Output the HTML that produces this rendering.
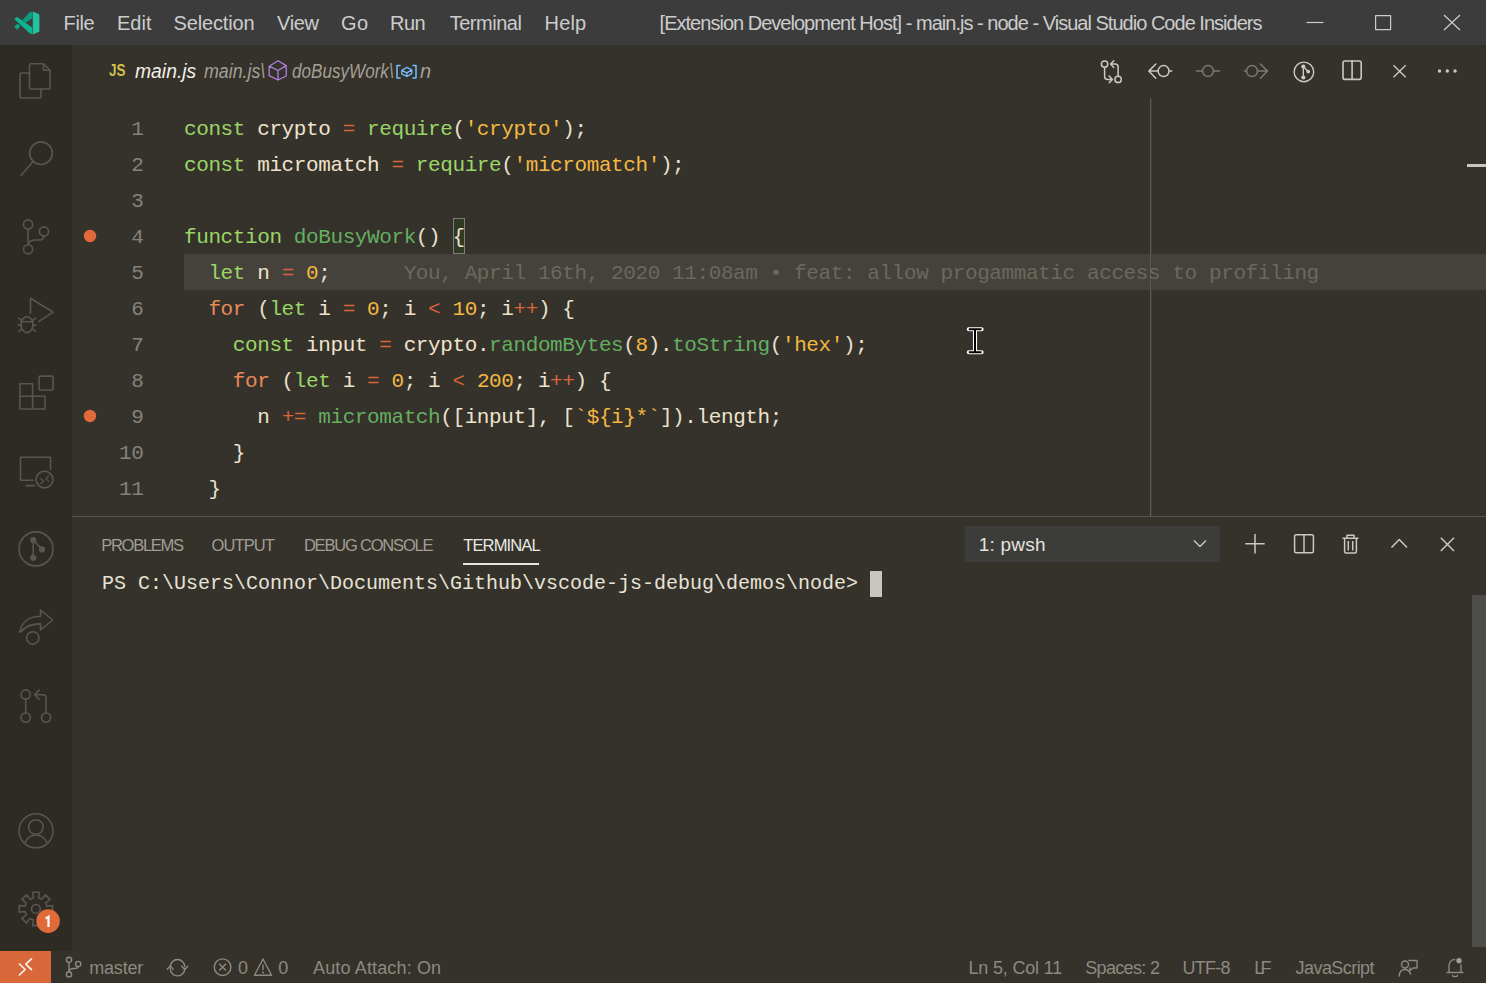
<!DOCTYPE html>
<html><head><meta charset="utf-8">
<style>
*{margin:0;padding:0;box-sizing:border-box}
html,body{width:1486px;height:983px;overflow:hidden;background:#35322b;font-family:"Liberation Sans",sans-serif}
.b{position:absolute}
.t{position:absolute;white-space:pre}
.code{position:absolute;font-family:"Liberation Mono",monospace;font-size:21px;line-height:21px;letter-spacing:-0.4px;white-space:pre}
.ln{position:absolute;font-family:"Liberation Mono",monospace;font-size:21px;line-height:21px;letter-spacing:-0.4px;white-space:pre;color:#85827a}
.term{position:absolute;font-family:"Liberation Mono",monospace;font-size:20px;line-height:20px;white-space:pre;color:#e8e2d6}
svg{position:absolute;left:0;top:0}
</style></head>
<body>
<div class="b" style="left:0;top:0;width:1486px;height:45px;background:#3c3c3c"></div>
<div class="b" style="left:0;top:45px;width:72px;height:906px;background:#2e2b25"></div><div class="b" style="left:71px;top:45px;width:1px;height:906px;background:#2b2823"></div>
<div class="b" style="left:72px;top:45px;width:1414px;height:472px;background:#35322b"></div>
<!-- current line highlight -->
<div class="b" style="left:184px;top:254px;width:1302px;height:36px;background:#45423b"></div>
<!-- bracket match -->
<div class="b" style="left:453px;top:218px;width:12px;height:36px;border:1px solid #7f7c74;background:#2f3a25"></div>
<!-- ruler -->
<div class="b" style="left:1150px;top:98px;width:1px;height:419px;background:#5c5b57"></div><div class="b" style="left:1151px;top:98px;width:1px;height:419px;background:#3f3d38"></div>
<!-- overview mark -->
<div class="b" style="left:1467px;top:164px;width:19px;height:3px;background:#c9c6bf"></div>
<!-- panel -->
<div class="b" style="left:72px;top:516px;width:1414px;height:1px;background:#57534b"></div>
<div class="b" style="left:72px;top:517px;width:1414px;height:434px;background:#35322b"></div>
<div class="b" style="left:463px;top:563px;width:76px;height:2px;background:#e7e4de"></div>
<div class="b" style="left:965px;top:526px;width:255px;height:36px;background:#3c3c3b"></div>
<div class="b" style="left:870px;top:571px;width:12px;height:26px;background:#c9c6bf"></div>
<div class="b" style="left:1472px;top:595px;width:14px;height:352px;background:#4f4d49"></div>
<!-- status -->
<div class="b" style="left:0;top:951px;width:1486px;height:32px;background:#35322b"></div>
<div class="b" style="left:0;top:951px;width:51px;height:32px;background:#d8673a"></div>
<svg width="1486" height="983" viewBox="0 0 1486 983" fill="none" stroke-linecap="round" stroke-linejoin="round">
<g stroke="none"><path d="M29.5 12.3 L32.3 11.6 V18.3 L25.9 22.7 L22.4 20.3 Z" fill="#0a9b7e"/><path d="M14.3 18.9 L16.8 16.8 L32.3 27.4 V34.3 L29.9 33.6 Z" fill="#0bb493"/><path d="M14.3 26.6 L17.7 23.8 L20.4 26 L16.9 29.7 Z" fill="#0aa988"/><path d="M32.8 11.4 L38.6 13.9 Q39.4 14.3 39.4 15.1 V30.9 Q39.4 31.7 38.6 32.1 L32.8 34.4 Z" fill="#25c2a2"/></g>
<g stroke="#cccccc" stroke-width="1.2" stroke-linecap="butt"><path d="M1306.5 22.5 H1323.5"/><rect x="1375.6" y="15.6" width="15" height="14" /><path d="M1444 15 L1460 30 M1460 15 L1444 30"/></g>
<g stroke="#59564f" stroke-width="1.6"><path d="M29.5 73 H21.5 a1.5 1.5 0 0 0 -1.5 1.5 V96.5 a1.5 1.5 0 0 0 1.5 1.5 H39.5 a1.5 1.5 0 0 0 1.5 -1.5 V89.5"/><path d="M31 63.8 H43.5 L50 70.3 V87.5 a1.5 1.5 0 0 1 -1.5 1.5 H31 a1.5 1.5 0 0 1 -1.5 -1.5 V65.3 a1.5 1.5 0 0 1 1.5 -1.5 Z M43.5 63.8 V70.3 H50"/><circle cx="41" cy="153.2" r="11.3"/><path d="M33 161.5 L21 175.5"/><circle cx="28.1" cy="224.5" r="4.6"/><circle cx="44" cy="231.5" r="4.6"/><circle cx="28.1" cy="249.3" r="4.6"/><path d="M28.1 229.1 V244.7 M28.3 244.5 C29 241 31.5 240 35 240 H39.5 C42.5 240 43.8 238.5 43.8 236.1"/><path d="M30.5 313.4 V298.3 L53 312.1 L38.6 321.6"/><ellipse cx="27" cy="324.6" rx="6" ry="8"/><path d="M21 321.8 H33 M18.6 318.2 L21.6 320.5 M35.4 318.2 L32.4 320.5 M18.3 325.1 H21 M33 325.1 H35.6 M21.6 328.9 L18.6 331.5 M32.4 328.9 L35.6 331.5"/><path d="M19.9 383.7 H32.6 V396.2 H45 V409 H19.9 Z M19.9 396.2 H32.6 V409"/><rect x="39.1" y="376.1" width="13.9" height="13.9" rx="1"/><path d="M50.5 469.4 V457.3 H20.5 V480.2 H33"/><path d="M26.2 485.6 H34.5"/><circle cx="44.5" cy="479.5" r="8.4"/><path d="M40.8 478.6 L43.6 481.2 L40.8 483.8 M48.6 475.8 L45.8 478.6 L48.6 481.2" stroke-width="1.2"/><circle cx="36" cy="548.9" r="17"/><path d="M33.2 540 V557.8 M33.2 540 L42 549.4"/></g>
<g fill="#59564f" stroke="none"><circle cx="33.2" cy="540" r="3.1"/><circle cx="42" cy="549.4" r="3.1"/><circle cx="33.3" cy="557.8" r="3.1"/></g>
<g stroke="#59564f" stroke-width="1.6"><path d="M19.8 632 C21.5 622.5 28.5 616.2 40.5 616.2 V610 L52.8 620 L40.5 630 V623.9 C31 623.9 25 626.5 20.8 632 Z"/><circle cx="32.8" cy="637.9" r="6.2"/><circle cx="25.7" cy="694.5" r="4.6"/><circle cx="25.7" cy="717.6" r="4.6"/><circle cx="46.1" cy="717.6" r="4.6"/><path d="M25.7 699.1 V713 M46 713 V697.7 Q46 694.7 43 694.7 H34.8 M39.2 690.1 L34.6 694.7 L39.2 699.3"/><circle cx="36" cy="830.8" r="17"/><circle cx="35.9" cy="827.1" r="7.3"/><path d="M24.9 842.6 C27.5 838 31.5 835 35.9 835 C40.5 835 44.5 838 47 842.6"/><path d="M31.70 898.52 L33.29 898.01 L32.66 892.21 L39.14 892.21 L38.51 898.01 L40.28 898.59 L41.75 899.35 L45.41 894.81 L49.99 899.39 L45.45 903.05 L46.28 904.70 L46.79 906.29 L52.59 905.66 L52.59 912.14 L46.79 911.51 L46.21 913.28 L45.45 914.75 L49.99 918.41 L45.41 922.99 L41.75 918.45 L40.10 919.28 L38.51 919.79 L39.14 925.59 L32.66 925.59 L33.29 919.79 L31.52 919.21 L30.05 918.45 L26.39 922.99 L21.81 918.41 L26.35 914.75 L25.52 913.10 L25.01 911.51 L19.21 912.14 L19.21 905.66 L25.01 906.29 L25.59 904.52 L26.35 903.05 L21.81 899.39 L26.39 894.81 L30.05 899.35 Z"/><circle cx="35.9" cy="908.9" r="4.4"/></g>
<circle cx="48.1" cy="921.1" r="11.8" fill="#e06a39" stroke="#2b2924" stroke-width="0"/>
<path d="M45.6 918.6 L48.5 916.8 V927" stroke="#ffffff" stroke-width="2.2" stroke-linecap="butt" stroke-linejoin="miter"/>
<g stroke="#b47fe0" stroke-width="1.3"><path d="M278 60.8 L286.2 65.6 V76 L278 80 L269.2 75.7 V66.2 Z M269.2 66.2 L278 70.5 L286.2 65.6 M278 70.5 V80"/></g>
<g stroke="#75beff" stroke-width="1.5" stroke-linecap="butt"><path d="M400.6 65.5 H397 V78 H400.6 M412.4 65.5 H416 V78 H412.4"/><path d="M401.8 70.2 L406.8 67.4 L411.8 69.9 V73.6 L406.8 76.5 L401.8 73.9 Z M401.8 70.2 L406.8 72.9 L411.8 69.9 M406.8 72.9 V76.5" stroke-width="1.25" stroke-linejoin="round"/></g>
<circle cx="90" cy="236" r="6.2" fill="#e06a39" stroke="none"/><circle cx="90" cy="416" r="6.2" fill="#e06a39" stroke="none"/>
<g stroke="#cbc8c1" stroke-width="1.5"><circle cx="1104.6" cy="64.1" r="3.2"/><circle cx="1118.1" cy="79.4" r="3.2"/><path d="M1104.6 67.4 V76.4 Q1104.6 79.4 1107.6 79.4 H1112.2 M1109.2 75.9 L1112.4 79.4 L1109.2 82.8"/><path d="M1118.1 76.1 V67.1 Q1118.1 64.1 1115.1 64.1 H1110.8 M1113.8 60.7 L1110.6 64.1 L1113.8 67.5"/><circle cx="1163.6" cy="71.1" r="5.5"/><path d="M1158.1 71.1 H1148.8 M1155.8 64 L1148.8 71.1 L1155.8 78.3 M1169.1 71.1 H1171.8"/></g>
<g stroke="#7c786f" stroke-width="1.5"><circle cx="1208" cy="71.1" r="5.5"/><path d="M1196.3 71.1 H1202.5 M1213.5 71.1 H1219.7"/><circle cx="1252" cy="71.1" r="5.5"/><path d="M1244.3 71.1 H1246.5 M1257.5 71.1 H1267.3 M1260.5 64 L1267.5 71.1 L1260.5 78.3"/></g>
<g stroke="#cbc8c1" stroke-width="1.4"><circle cx="1303.9" cy="71.9" r="9.8"/><path d="M1303.3 66.5 V77.5 M1303.3 66.5 L1308.2 71.6"/><rect x="1343" y="61" width="18.2" height="18.4" rx="1.8" stroke-width="1.6"/><path d="M1352.1 61 V79.4" stroke-width="1.6"/><path d="M1393.5 65.2 L1405.7 77.3 M1405.7 65.2 L1393.5 77.3" stroke-linecap="butt"/></g>
<g fill="#cbc8c1" stroke="none"><circle cx="1303.3" cy="66.5" r="2.1"/><circle cx="1308.2" cy="71.6" r="1.9"/><circle cx="1303.3" cy="77.5" r="2.1"/><circle cx="1439.5" cy="71" r="1.7"/><circle cx="1447.3" cy="71" r="1.7"/><circle cx="1455.1" cy="71" r="1.7"/></g>
<g stroke="#cbc8c1" stroke-width="1.5" stroke-linecap="butt"><path d="M1194 540.5 L1200 546.6 L1206 540.5" stroke-width="1.4"/><path d="M1255 534 V553.4 M1245.3 543.7 H1264.7"/><rect x="1294.6" y="534.8" width="18.8" height="18" rx="1.5"/><path d="M1304 534.8 V552.8"/><path d="M1342.5 538.3 H1358.5 M1347 538 V535.3 H1354 V538 M1344.6 538.5 V551.5 Q1344.6 553 1346 553 H1355 Q1356.4 553 1356.4 551.5 V538.5 M1348.3 541 V550.5 M1352.7 541 V550.5"/><path d="M1391.5 547.5 L1399.3 539.5 L1407 547.5"/><path d="M1440.8 537.8 L1454 551 M1454 537.8 L1440.8 551"/></g>
<path d="M19.4 964 L25.2 969.5 L19.4 975 M31.5 958.8 L25.8 964.2 L31.5 969.6" stroke="#fbf6ee" stroke-width="1.6" stroke-linecap="round"/>
<g stroke="#8d8980" stroke-width="1.4"><circle cx="69" cy="959.8" r="2.6"/><circle cx="69" cy="974.4" r="2.6"/><circle cx="78.2" cy="964" r="2.6"/><path d="M69 962.4 V971.8 M69 971.5 C69.5 969 71 968.5 74 968.5 C77 968.5 78.2 968 78.2 966.6"/><path d="M170.2 966.8 A7.3 7.3 0 0 1 184.8 966.8 M181.7 966.2 L184.8 969.4 L187.8 966.2 M184.8 968.6 A7.3 7.3 0 0 1 170.2 968.6 M167.2 969.2 L170.2 966 L173.2 969.2"/><circle cx="222.6" cy="967.2" r="8.3"/><path d="M219.2 963.8 L226 970.6 M226 963.8 L219.2 970.6" stroke-linecap="butt"/><path d="M263 959 L271.5 975.3 H254.5 Z M263 964.5 V970" stroke-linecap="butt"/><circle cx="263" cy="972.5" r="0.4" fill="#8d8980"/><path d="M1409 960.5 H1417 V968 H1413 L1410 970.5 V968" /><circle cx="1405" cy="964.5" r="3.5"/><path d="M1399.2 976 C1399.5 971.5 1402 969.5 1405 969.5 C1407.5 969.5 1409.5 971 1410.5 974"/><path d="M1447 972.5 H1463 M1449 972.5 V966 C1449 962 1451.5 959.5 1455 959.5 C1458.5 959.5 1461 962 1461 966 V972.5 M1452.5 975.5 C1453 977 1457 977 1457.5 975.5"/></g>
<circle cx="1459" cy="960.8" r="3.3" fill="#a19d95" stroke="#35322b" stroke-width="1.2"/>
<g stroke-linecap="round"><path d="M968.8 329.2 H981.6 M975 329.2 V352.2 M968.8 352.2 H981.6" stroke="#ffffff" stroke-width="4.1"/><path d="M968.8 329.2 H981.6 M975 329.5 V352 M968.8 352.2 H981.6" stroke="#000000" stroke-width="2" stroke-linecap="butt"/></g>
</svg>
<div class="code" style="left:184px;top:119px"><span style="color:#9ad666">const</span><span style="color:#ebe0cf"> </span><span style="color:#f0e2cc">crypto</span><span style="color:#ebe0cf"> </span><span style="color:#d8643a">=</span><span style="color:#ebe0cf"> </span><span style="color:#9ad666">require</span><span style="color:#ebe0cf">(</span><span style="color:#f3b842">&#x27;crypto&#x27;</span><span style="color:#ebe0cf">);</span></div>
<div class="ln" style="left:131.3px;top:119px">1</div>
<div class="code" style="left:184px;top:155px"><span style="color:#9ad666">const</span><span style="color:#ebe0cf"> </span><span style="color:#f0e2cc">micromatch</span><span style="color:#ebe0cf"> </span><span style="color:#d8643a">=</span><span style="color:#ebe0cf"> </span><span style="color:#9ad666">require</span><span style="color:#ebe0cf">(</span><span style="color:#f3b842">&#x27;micromatch&#x27;</span><span style="color:#ebe0cf">);</span></div>
<div class="ln" style="left:131.3px;top:155px">2</div>
<div class="code" style="left:184px;top:191px"></div>
<div class="ln" style="left:131.3px;top:191px">3</div>
<div class="code" style="left:184px;top:227px"><span style="color:#9ad666">function</span><span style="color:#ebe0cf"> </span><span style="color:#64ae62">doBusyWork</span><span style="color:#ebe0cf">() {</span></div>
<div class="ln" style="left:131.3px;top:227px">4</div>
<div class="code" style="left:184px;top:263px"><span style="color:#ebe0cf">  </span><span style="color:#9ad666">let</span><span style="color:#ebe0cf"> </span><span style="color:#f0e2cc">n</span><span style="color:#ebe0cf"> </span><span style="color:#d8643a">=</span><span style="color:#ebe0cf"> </span><span style="color:#f3b842">0</span><span style="color:#ebe0cf">;</span><span style="color:#ebe0cf">      </span><span style="color:#6b6860">You, April 16th, 2020 11:08am • feat: allow progammatic access to profiling</span></div>
<div class="ln" style="left:131.3px;top:263px">5</div>
<div class="code" style="left:184px;top:299px"><span style="color:#ebe0cf">  </span><span style="color:#e88a58">for</span><span style="color:#ebe0cf"> (</span><span style="color:#9ad666">let</span><span style="color:#ebe0cf"> </span><span style="color:#f0e2cc">i</span><span style="color:#ebe0cf"> </span><span style="color:#d8643a">=</span><span style="color:#ebe0cf"> </span><span style="color:#f3b842">0</span><span style="color:#ebe0cf">; </span><span style="color:#f0e2cc">i</span><span style="color:#ebe0cf"> </span><span style="color:#d8643a">&lt;</span><span style="color:#ebe0cf"> </span><span style="color:#f3b842">10</span><span style="color:#ebe0cf">; </span><span style="color:#f0e2cc">i</span><span style="color:#d8643a">++</span><span style="color:#ebe0cf">) {</span></div>
<div class="ln" style="left:131.3px;top:299px">6</div>
<div class="code" style="left:184px;top:335px"><span style="color:#ebe0cf">    </span><span style="color:#9ad666">const</span><span style="color:#ebe0cf"> </span><span style="color:#f0e2cc">input</span><span style="color:#ebe0cf"> </span><span style="color:#d8643a">=</span><span style="color:#ebe0cf"> </span><span style="color:#f0e2cc">crypto</span><span style="color:#ebe0cf">.</span><span style="color:#64ae62">randomBytes</span><span style="color:#ebe0cf">(</span><span style="color:#f3b842">8</span><span style="color:#ebe0cf">).</span><span style="color:#64ae62">toString</span><span style="color:#ebe0cf">(</span><span style="color:#f3b842">&#x27;hex&#x27;</span><span style="color:#ebe0cf">);</span></div>
<div class="ln" style="left:131.3px;top:335px">7</div>
<div class="code" style="left:184px;top:371px"><span style="color:#ebe0cf">    </span><span style="color:#e88a58">for</span><span style="color:#ebe0cf"> (</span><span style="color:#9ad666">let</span><span style="color:#ebe0cf"> </span><span style="color:#f0e2cc">i</span><span style="color:#ebe0cf"> </span><span style="color:#d8643a">=</span><span style="color:#ebe0cf"> </span><span style="color:#f3b842">0</span><span style="color:#ebe0cf">; </span><span style="color:#f0e2cc">i</span><span style="color:#ebe0cf"> </span><span style="color:#d8643a">&lt;</span><span style="color:#ebe0cf"> </span><span style="color:#f3b842">200</span><span style="color:#ebe0cf">; </span><span style="color:#f0e2cc">i</span><span style="color:#d8643a">++</span><span style="color:#ebe0cf">) {</span></div>
<div class="ln" style="left:131.3px;top:371px">8</div>
<div class="code" style="left:184px;top:407px"><span style="color:#ebe0cf">      </span><span style="color:#f0e2cc">n</span><span style="color:#ebe0cf"> </span><span style="color:#d8643a">+=</span><span style="color:#ebe0cf"> </span><span style="color:#64ae62">micromatch</span><span style="color:#ebe0cf">([</span><span style="color:#f0e2cc">input</span><span style="color:#ebe0cf">], [</span><span style="color:#f3b842">`${i}*`</span><span style="color:#ebe0cf">]).</span><span style="color:#f0e2cc">length</span><span style="color:#ebe0cf">;</span></div>
<div class="ln" style="left:131.3px;top:407px">9</div>
<div class="code" style="left:184px;top:443px"><span style="color:#ebe0cf">    }</span></div>
<div class="ln" style="left:119.1px;top:443px">10</div>
<div class="code" style="left:184px;top:479px"><span style="color:#ebe0cf">  }</span></div>
<div class="ln" style="left:119.1px;top:479px">11</div>
<div class="term" style="left:102px;top:574px">PS C:\Users\Connor\Documents\Github\vscode-js-debug\demos\node&gt;</div>
<div class="t" style="left:63.50px;top:13.00px;font-family:'Liberation Sans';font-size:20px;line-height:20px;color:#cccccc;letter-spacing:-0.333px;">File</div>
<div class="t" style="left:117.00px;top:13.00px;font-family:'Liberation Sans';font-size:20px;line-height:20px;color:#cccccc;letter-spacing:0.000px;">Edit</div>
<div class="t" style="left:173.50px;top:13.00px;font-family:'Liberation Sans';font-size:20px;line-height:20px;color:#cccccc;letter-spacing:-0.137px;">Selection</div>
<div class="t" style="left:277.00px;top:13.00px;font-family:'Liberation Sans';font-size:20px;line-height:20px;color:#cccccc;letter-spacing:-0.333px;">View</div>
<div class="t" style="left:341.00px;top:13.00px;font-family:'Liberation Sans';font-size:20px;line-height:20px;color:#cccccc;letter-spacing:0.500px;">Go</div>
<div class="t" style="left:390.00px;top:13.00px;font-family:'Liberation Sans';font-size:20px;line-height:20px;color:#cccccc;letter-spacing:-0.500px;">Run</div>
<div class="t" style="left:449.70px;top:13.00px;font-family:'Liberation Sans';font-size:20px;line-height:20px;color:#cccccc;letter-spacing:-0.486px;">Terminal</div>
<div class="t" style="left:544.60px;top:13.00px;font-family:'Liberation Sans';font-size:20px;line-height:20px;color:#cccccc;letter-spacing:0.133px;">Help</div>
<div class="t" style="left:659.60px;top:13.00px;font-family:'Liberation Sans';font-size:20px;line-height:20px;color:#cccccc;letter-spacing:-0.981px;">[Extension Development Host] - main.js - node - Visual Studio Code Insiders</div>
<div class="t" style="left:108.70px;top:62.20px;font-family:'Liberation Sans';font-size:16.5px;line-height:16.5px;color:#d4bf4c;letter-spacing:0.000px;transform:scaleX(0.8158);transform-origin:0 0;font-weight:bold;">JS</div>
<div class="t" style="left:135.00px;top:61.00px;font-family:'Liberation Sans';font-size:20px;line-height:20px;color:#f2efe8;letter-spacing:0.000px;transform:scaleX(0.9661);transform-origin:0 0;font-style:italic;">main.js</div>
<div class="t" style="left:204.00px;top:61.00px;font-family:'Liberation Sans';font-size:20px;line-height:20px;color:#a39f96;letter-spacing:0.000px;transform:scaleX(0.8896);transform-origin:0 0;font-style:italic;">main.js\</div>
<div class="t" style="left:292.00px;top:61.00px;font-family:'Liberation Sans';font-size:20px;line-height:20px;color:#a39f96;letter-spacing:0.000px;transform:scaleX(0.8547);transform-origin:0 0;font-style:italic;">doBusyWork\</div>
<div class="t" style="left:420.00px;top:61.00px;font-family:'Liberation Sans';font-size:20px;line-height:20px;color:#a39f96;letter-spacing:0.000px;font-style:italic;">n</div>
<div class="t" style="left:101.20px;top:537.00px;font-family:'Liberation Sans';font-size:16.5px;line-height:16.5px;color:#a29e95;letter-spacing:-1.257px;">PROBLEMS</div>
<div class="t" style="left:211.50px;top:537.00px;font-family:'Liberation Sans';font-size:16.5px;line-height:16.5px;color:#a29e95;letter-spacing:-0.900px;">OUTPUT</div>
<div class="t" style="left:303.90px;top:537.00px;font-family:'Liberation Sans';font-size:16.5px;line-height:16.5px;color:#a29e95;letter-spacing:-1.192px;">DEBUG CONSOLE</div>
<div class="t" style="left:463.20px;top:537.00px;font-family:'Liberation Sans';font-size:16.5px;line-height:16.5px;color:#ebe8e2;letter-spacing:-0.843px;">TERMINAL</div>
<div class="t" style="left:978.70px;top:535.00px;font-family:'Liberation Sans';font-size:19px;line-height:19px;color:#e6e3dc;letter-spacing:0.217px;">1: pwsh</div>
<div class="t" style="left:89.20px;top:958.50px;font-family:'Liberation Sans';font-size:18px;line-height:18px;color:#8d8980;letter-spacing:-0.180px;">master</div>
<div class="t" style="left:238.00px;top:958.50px;font-family:'Liberation Sans';font-size:18px;line-height:18px;color:#8d8980;letter-spacing:0.000px;">0</div>
<div class="t" style="left:278.30px;top:958.50px;font-family:'Liberation Sans';font-size:18px;line-height:18px;color:#8d8980;letter-spacing:0.000px;">0</div>
<div class="t" style="left:313.00px;top:958.50px;font-family:'Liberation Sans';font-size:18px;line-height:18px;color:#8d8980;letter-spacing:0.143px;">Auto Attach: On</div>
<div class="t" style="left:968.40px;top:958.50px;font-family:'Liberation Sans';font-size:18px;line-height:18px;color:#8d8980;letter-spacing:-0.173px;">Ln 5, Col 11</div>
<div class="t" style="left:1085.20px;top:958.50px;font-family:'Liberation Sans';font-size:18px;line-height:18px;color:#8d8980;letter-spacing:-0.662px;">Spaces: 2</div>
<div class="t" style="left:1182.60px;top:958.50px;font-family:'Liberation Sans';font-size:18px;line-height:18px;color:#8d8980;letter-spacing:-0.775px;">UTF-8</div>
<div class="t" style="left:1254.20px;top:958.50px;font-family:'Liberation Sans';font-size:18px;line-height:18px;color:#8d8980;letter-spacing:-3.600px;">LF</div>
<div class="t" style="left:1295.60px;top:958.50px;font-family:'Liberation Sans';font-size:18px;line-height:18px;color:#8d8980;letter-spacing:-0.567px;">JavaScript</div>
</body></html>
